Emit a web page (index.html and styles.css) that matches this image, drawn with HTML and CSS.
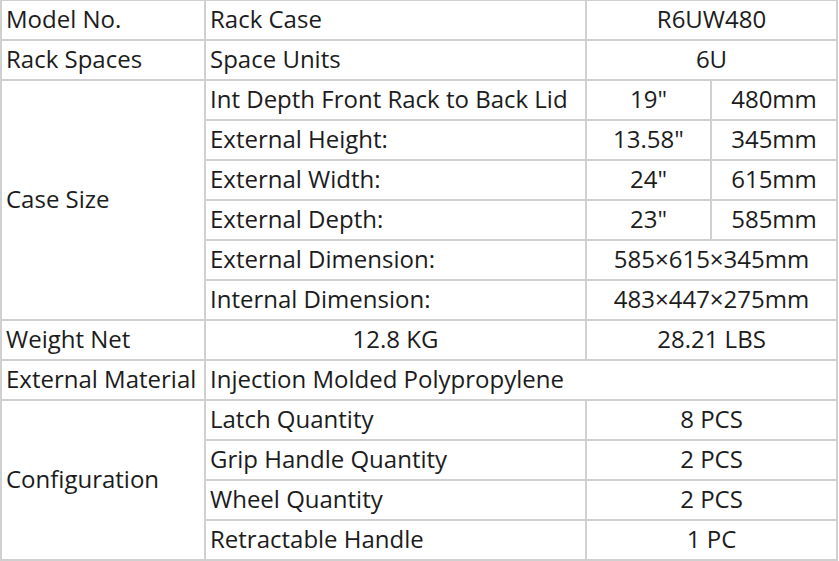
FILE: index.html
```html
<!DOCTYPE html>
<html>
<head>
<meta charset="utf-8">
<link rel="stylesheet" href="styles.css">
</head>
<body>
<table class="spec">
  <colgroup>
    <col class="c1"><col class="c2"><col class="c3"><col class="c4">
  </colgroup>
  <tr><td>Model No.</td><td>Rack Case</td><td class="ctr" colspan="2">R6UW480</td></tr>
  <tr><td>Rack Spaces</td><td>Space Units</td><td class="ctr" colspan="2">6U</td></tr>
  <tr><td rowspan="6">Case Size</td><td>Int Depth Front Rack to Back Lid</td><td class="ctr">19"</td><td class="ctr">480mm</td></tr>
  <tr><td>External Height:</td><td class="ctr">13.58"</td><td class="ctr">345mm</td></tr>
  <tr><td>External Width:</td><td class="ctr">24"</td><td class="ctr">615mm</td></tr>
  <tr><td>External Depth:</td><td class="ctr">23"</td><td class="ctr">585mm</td></tr>
  <tr><td>External Dimension:</td><td class="ctr" colspan="2">585×615×345mm</td></tr>
  <tr><td>Internal Dimension:</td><td class="ctr" colspan="2">483×447×275mm</td></tr>
  <tr><td>Weight Net</td><td class="ctr">12.8 KG</td><td class="ctr" colspan="2">28.21 LBS</td></tr>
  <tr><td>External Material</td><td colspan="3">Injection Molded Polypropylene</td></tr>
  <tr><td rowspan="4">Configuration</td><td>Latch Quantity</td><td class="ctr" colspan="2">8 PCS</td></tr>
  <tr><td>Grip Handle Quantity</td><td class="ctr" colspan="2">2 PCS</td></tr>
  <tr><td>Wheel Quantity</td><td class="ctr" colspan="2">2 PCS</td></tr>
  <tr><td>Retractable Handle</td><td class="ctr" colspan="2">1 PC</td></tr>
</table>
</body>
</html>
```
FILE: styles.css
```css
html, body {
  margin: 0;
  padding: 0;
  background: #ffffff;
}
.spec {
  border-collapse: collapse;
  table-layout: fixed;
  width: 838px;
  margin-top: -1px;
  font-family: "Open Sans", "Noto Sans", sans-serif;
  font-size: 24px;
  color: #1c1c1c;
}
.c1 { width: 204px; }
.c2 { width: 381px; }
.c3 { width: 125px; }
.c4 { width: 126px; }
.spec tr { height: 40px; }
.spec td {
  border: 2px solid #d0d0d0;
  padding: 0 0 3px 4px;
  vertical-align: middle;
  white-space: nowrap;
  line-height: 30px;
}
.spec td.ctr {
  text-align: center;
  padding: 0 0 3px 0;
}
```
